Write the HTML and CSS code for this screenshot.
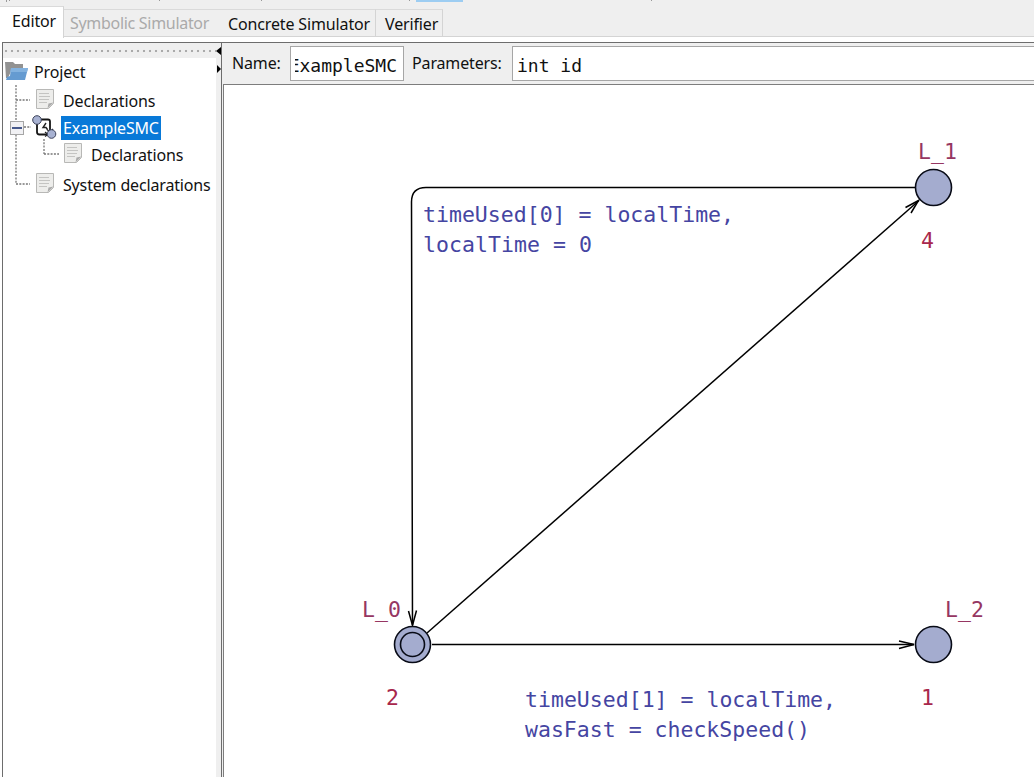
FILE: index.html
```html
<!DOCTYPE html>
<html lang="en">
<head>
<meta charset="utf-8">
<title>Editor</title>
<link rel="stylesheet" href="styles.css">
</head>
<body>
<div class="app">
  <header class="tabs">
    <svg class="toolbar-edge" width="1034" height="7" viewBox="0 0 1034 7">
      <path d="M416 0h47v2h-47z" fill="#9dcdf2"/>
      <path d="M6.500 0v2M9.500 0v1M159.500 0v1M261.500 0v1M409.500 0v1M651.500 0v1" stroke="#999"/>
    </svg>
    <div class="tab tab-editor"><span>Editor</span></div>
    <div class="tab tab-symbolic"><span>Symbolic Simulator</span></div>
    <div class="tab tab-concrete"><span>Concrete Simulator</span></div>
    <div class="tab tab-verifier"><span>Verifier</span></div>
  </header>
  <main class="workspace">
    <aside class="sidebar">
      <div class="grip"></div>
      <nav class="tree">
        <svg class="branches" width="60" height="130" viewBox="3 58 60 130">
          <path d="M16 85V184M16 100H30M16 184H30M24 127H31M44 139V154M44 154H59" fill="none" stroke="#777" stroke-width="1.300" stroke-dasharray="2 1.300"/>
          <rect x="10.500" y="121.500" width="13" height="13" fill="#f1f1f4" stroke="#a6a6a6"/>
          <path d="M12 128H22" stroke="#47598c" stroke-width="2"/>
        </svg>
        <div class="row row-project">
          <svg class="folder" width="26" height="22" viewBox="0 0 26 22">
            <path d="M1 2h8l2 2h8v5H8L4 18H2z" fill="#929292"/>
            <path d="M7 8h17l-3 12H2l1-3 3-1z" fill="#659bd1"/>
            <path d="M7 8h17l-1 4H6z" fill="#83b2df"/>
          </svg><span>Project</span>
        </div>
        <div class="row row-decl">
          <svg class="page" width="20" height="22" viewBox="0 0 20 22"><path d="M1.500 1.500h17v14l-5 5h-12z" fill="#ededeb" stroke="#b8b8b6"/><path d="M4 5.500h10M4 8.500h11M4 11.500h10M4 14.500h8" stroke="#c4c4c2"/><path d="M12.500 20.500l1-5 5-1z" fill="#aaa"/></svg><span>Declarations</span>
        </div>
        <div class="row row-template">
          <svg class="automaton" width="26" height="24" viewBox="0 0 26 24">
            <path d="M9 4.500h7q2 0 2 2V16M5 8v9q0 2.500 2.500 2.500H16" fill="none" stroke="#151515" stroke-width="1.800"/>
            <path d="M15 14.500l3 2.500 3-3M13 17l3 2.500-3 2" fill="none" stroke="#222" stroke-width="1.200"/>
            <path d="M14 8l-3 4.500h3l1.500 2" fill="none" stroke="#222" stroke-width="1.400"/>
            <circle cx="5" cy="5" r="4.300" fill="#a8b2d2" stroke="#3d435b"/><circle cx="19.500" cy="19" r="4.300" fill="#a8b2d2" stroke="#3d435b"/>
          </svg><span class="selected">ExampleSMC</span>
        </div>
        <div class="row row-local">
          <svg class="page" width="20" height="22" viewBox="0 0 20 22"><path d="M1.500 1.500h17v14l-5 5h-12z" fill="#ededeb" stroke="#b8b8b6"/><path d="M4 5.500h10M4 8.500h11M4 11.500h10M4 14.500h8" stroke="#c4c4c2"/><path d="M12.500 20.500l1-5 5-1z" fill="#aaa"/></svg><span>Declarations</span>
        </div>
        <div class="row row-system">
          <svg class="page" width="20" height="22" viewBox="0 0 20 22"><path d="M1.500 1.500h17v14l-5 5h-12z" fill="#ededeb" stroke="#b8b8b6"/><path d="M4 5.500h10M4 8.500h11M4 11.500h10M4 14.500h8" stroke="#c4c4c2"/><path d="M12.500 20.500l1-5 5-1z" fill="#aaa"/></svg><span>System declarations</span>
        </div>
      </nav>
    </aside>
    <div class="splitter">
      <svg width="5" height="34" viewBox="0 0 5 34"><path d="M5 4v8L0 8zM1 22v8l4-4z"/></svg>
    </div>
    <section class="editor">
      <div class="fields">
        <label class="name-label">Name:</label>
        <div class="field name-field"><span>ExampleSMC</span></div>
        <label class="param-label">Parameters:</label>
        <div class="field param-field"><span>int id</span></div>
      </div>
      <div class="canvas">
        <svg width="810" height="692" viewBox="224 85 810 692">
          <g class="edge">
            <path d="M915 187.500H426Q411.500 187.500 411.500 202L412.500 625"/>
            <path d="M408.500 611L412.500 625.500 416.500 610.500"/>
            <path d="M427 633L919 200.500"/>
            <path d="M905.500 207.500L918.500 200.500 911 213"/>
            <path d="M432 644.500H914"/>
            <path d="M899 641L914 644.500 899 648.500"/>
          </g>
          <g class="location">
            <circle cx="933.500" cy="187.500" r="18"/>
            <circle cx="412.500" cy="644.500" r="18"/>
            <circle cx="412.500" cy="644.500" r="12"/>
            <circle cx="933.500" cy="644.500" r="18"/>
          </g>
          <g class="update">
            <text x="423" y="222" textLength="311">timeUsed[0] = localTime,</text>
            <text x="423" y="252" textLength="169">localTime = 0</text>
            <text x="525" y="707" textLength="311">timeUsed[1] = localTime,</text>
            <text x="525" y="737" textLength="285">wasFast = checkSpeed()</text>
          </g>
          <g class="loc-name">
            <text x="918" y="159" textLength="39">L_1</text>
            <text x="362" y="617" textLength="39">L_0</text>
            <text x="945" y="617" textLength="39">L_2</text>
          </g>
          <g class="rate">
            <text x="921" y="248">4</text>
            <text x="386" y="705">2</text>
            <text x="921" y="705">1</text>
          </g>
        </svg>
      </div>
    </section>
  </main>
</div>
</body>
</html>
```
FILE: styles.css
```css
* { box-sizing: border-box; }
body { margin: 0; background: #fff; color: #111; font: 16px/20px "Noto Sans", sans-serif; letter-spacing: -0.14px; }
svg { display: block; flex: none; }
span, label { white-space: nowrap; }
.app { width: 1034px; height: 777px; overflow: hidden; display: flex; flex-direction: column; }
.tabs { position: relative; height: 42px; flex: none; display: flex; align-items: flex-start; background: linear-gradient(#efefef 36px, #d4d4d4 36px, #d4d4d4 37px, #fff 37px); }
.toolbar-edge { position: absolute; left: 0; top: 0; }
.tab { height: 28px; margin-top: 9px; padding-top: 4px; border-top: 1px solid #dadada; border-right: 1px solid #d4d4d4; }
.tab-editor { width: 64px; height: 32px; margin-top: 6px; padding: 4px 0 0 12px; background: #fff; }
.tab-symbolic { width: 150px; padding: 3px 0 0 6px; color: #aaa; border-right: 0; letter-spacing: -0.3px; }
.tab-concrete { width: 162px; padding-left: 14px; }
.tab-verifier { width: 67px; padding-left: 9px; }
.workspace { flex: 1; display: flex; margin-left: 2px; border-top: 1px solid #6d6d6d; }
.sidebar { width: 214px; border-left: 1px solid #6d6d6d; }
.grip { height: 15px; background: radial-gradient(circle at 3px 3px, #aaa 1px, transparent 1.6px) 0 5px / 6px 6px repeat-x #efefef; }
.tree { position: relative; }
.branches { position: absolute; left: 0; top: 0; }
.row { display: flex; align-items: center; height: 28px; }
.row svg { position: relative; }
.page { margin-bottom: 4px; }
.automaton { margin-bottom: 2px; }
.folder { margin-bottom: 2px; }
.row-project { padding-left: 1px; gap: 4px; }
.row-decl { height: 29px; padding-left: 32px; gap: 8px; }
.row-template { height: 26px; padding-left: 29px; gap: 3px; }
.row-local { height: 28px; padding-left: 60px; gap: 8px; }
.row-system { height: 32px; padding-left: 32px; gap: 8px; letter-spacing: -0.16px; }
.selected { background: #0879d8; color: #fff; width: 100px; height: 24px; line-height: 24px; padding-left: 2px; letter-spacing: -0.2px; }
.splitter { width: 6px; background: #efefef; border-right: 1px solid #6d6d6d; }
.editor { flex: 1; padding-left: 1px; display: flex; flex-direction: column; background: #efefef; }
.fields { height: 41px; display: flex; align-items: flex-start; padding: 3px 0 0 9px; }
label { padding-top: 7px; }
.name-label { width: 58px; }
.param-label { width: 108px; padding-left: 8px; }
.field { height: 35px; border: 1px solid #a6a6a6; background: #fff; font: 18px/35px "DejaVu Sans Mono", monospace; letter-spacing: 0; overflow: hidden; }
.name-field { width: 114px; padding: 0 6px 0 4px; }
.name-field span { display: flex; justify-content: flex-end; overflow: hidden; }
.param-field { flex: 1; padding: 1px 0 0 4px; border-right: 0; }
.name-field { padding-top: 1px; }
.canvas { flex: 1; border: 1px solid #7d7d7d; border-right: 0; border-bottom: 0; background: #fff; overflow: hidden; }
.edge { fill: none; stroke: #000; stroke-width: 1.5; }
.location { fill: #a4accf; stroke: #080b16; stroke-width: 1.6; }
text { font: 21.5px "DejaVu Sans Mono", monospace; letter-spacing: 0; }
.update { fill: #4545a2; }
.loc-name { fill: #963662; }
.rate { fill: #a8274c; }
```
